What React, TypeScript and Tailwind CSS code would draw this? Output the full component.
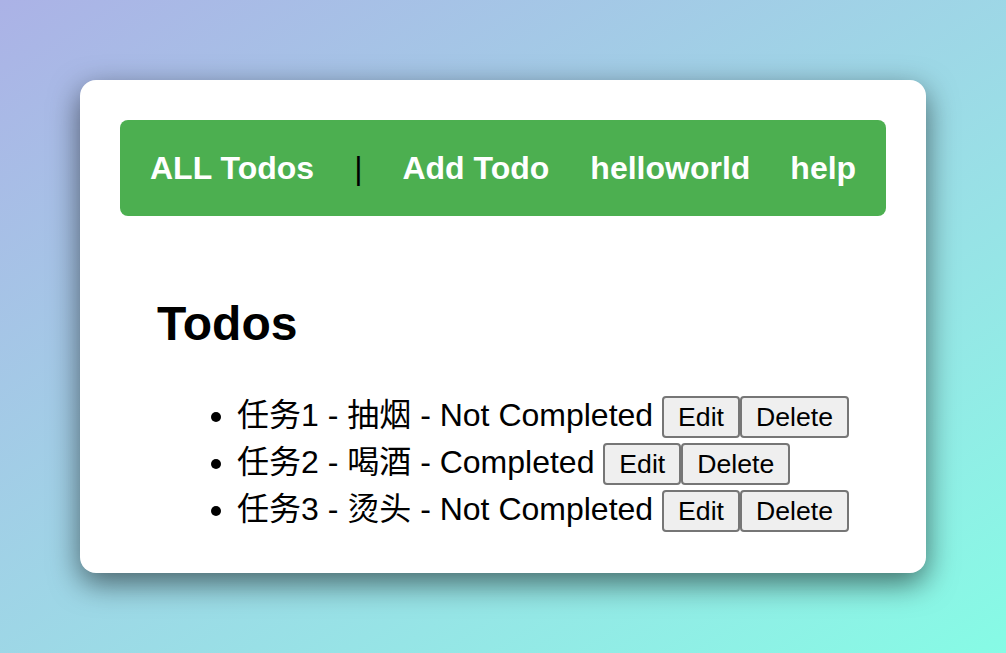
const todos = [
  { id: 1, title: "任务1", task: "抽烟", completed: false },
  { id: 2, title: "任务2", task: "喝酒", completed: true },
  { id: 3, title: "任务3", task: "烫头", completed: false },
];

const App = () => {
  return (
    <div
      className="h-screen w-full flex items-center justify-center bg-linear-to-br from-[#abb2e6] to-[#86fbe5]"
      style={{ fontFamily: '"Liberation Sans", Arial, "Noto Sans CJK SC", sans-serif' }}
    >
      <div className="w-[846px] bg-white rounded-[16px] p-[40px] shadow-[0_10px_30px_rgba(0,0,0,0.55)]">
        {/* Nav */}
        <nav className="h-[96px] bg-[#4caf50] rounded-[8px] flex items-center pl-[30px] text-[32px] leading-[37px]">
          <a className="text-white font-bold">ALL Todos</a>
          <span className="ml-[40px] mr-[40px] text-black">|</span>
          <a className="text-white font-bold">Add Todo</a>
          <a className="text-white font-bold ml-[41px]">helloworld</a>
          <a className="text-white font-bold ml-[40px]">help</a>
        </nav>

        {/* Todo list */}
        <div className="pl-[37px] pt-[80px]">
          <h2 className="text-[48px] leading-[55px] font-bold text-black">Todos</h2>
          <ul className="mt-[41px] pl-[80px] list-disc text-[32px] leading-[47px] text-black">
            {todos.map((t) => (
              <li key={t.id}>
                {t.title} - {t.task} - {t.completed ? "Completed" : "Not Completed"}{" "}
                <button className="text-[26.67px] leading-[30px] px-[14px] py-[4px] border-2 border-[#767676] rounded-[4px] bg-[#efefef] text-black">
                  Edit
                </button>
                <button className="text-[26.67px] leading-[30px] px-[14px] py-[4px] border-2 border-[#767676] rounded-[4px] bg-[#efefef] text-black">
                  Delete
                </button>
              </li>
            ))}
          </ul>
        </div>
      </div>
    </div>
  );
};

export default App;
